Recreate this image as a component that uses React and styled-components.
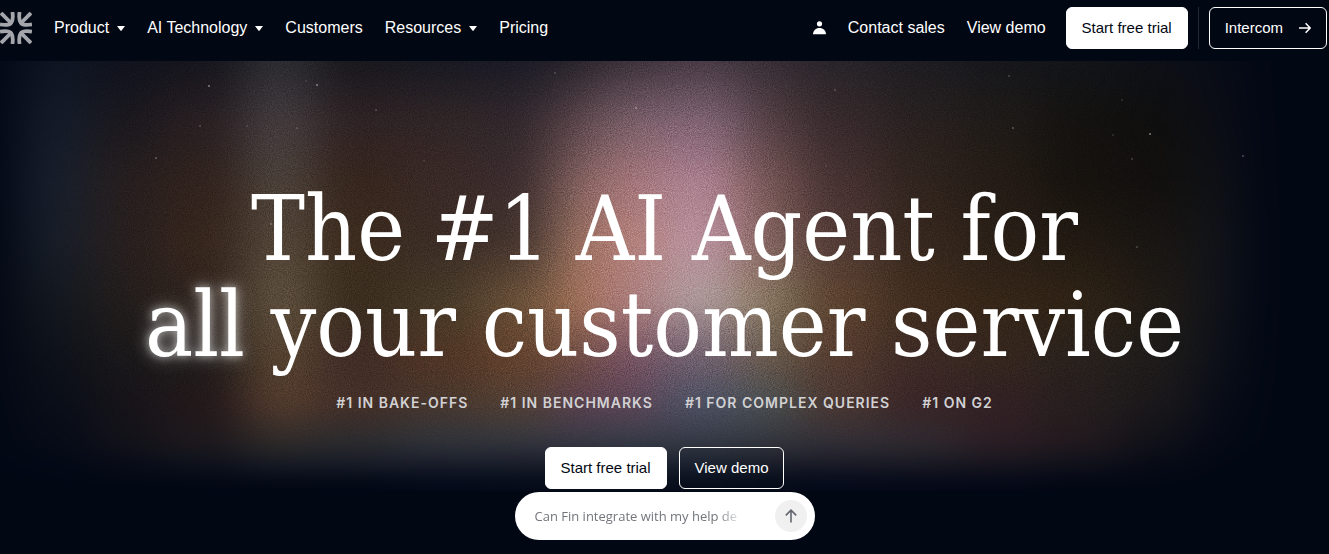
import React from "react";
import styled, { createGlobalStyle } from "styled-components";

const GlobalStyle = createGlobalStyle`
  *, *::before, *::after { box-sizing: border-box; }
  body {
    margin: 0;
    background: #020714;
    color: #fff;
    font-family: "Liberation Sans", Arial, sans-serif;
    font-size: 16px;
    line-height: 20px;
  }
  a { color: inherit; text-decoration: none; }
`;

const Header = styled.header`
  display: flex;
  align-items: flex-start;
  justify-content: space-between;
  height: 61px;
  padding: 7px 2px 0 0;
  background: #020714;
`;

const HeaderGroup = styled.div`
  display: flex;
  align-items: center;
  height: 42px;
`;

const LogoLink = styled.a`
  display: flex;
  margin-right: 22px;
`;

const Nav = styled.nav`
  display: flex;
  gap: ${(p) => p.$gap}px;
  margin-right: ${(p) => p.$end || 0}px;
`;

const MenuButton = styled.button`
  display: flex;
  align-items: center;
  gap: 8px;
  padding: 0;
  border: 0;
  background: none;
  color: inherit;
  font: inherit;
  cursor: pointer;
`;

const NavLink = styled.a`
  display: flex;
  align-items: center;
`;

const Divider = styled.span`
  width: 1px;
  height: 42px;
  margin: 0 10px;
  background: #242936;
`;

const Button = styled.button`
  display: flex;
  align-items: center;
  justify-content: center;
  gap: 16px;
  height: 42px;
  padding: 0 15px;
  border: 1px solid #fff;
  border-radius: 6px;
  background: ${(p) => (p.$solid ? "#fff" : "transparent")};
  color: ${(p) => (p.$solid ? "#020714" : "#fff")};
  font: inherit;
  font-size: 15px;
  white-space: nowrap;
  cursor: pointer;
`;

const Hero = styled.main`
  position: relative;
  display: flex;
  flex-direction: column;
  align-items: center;
  padding: 120px 0 14px;
`;

const Artwork = styled.svg`
  position: absolute;
  inset: 0 0 auto;
  width: 100%;
  height: 430px;
  z-index: -1;
`;

const Headline = styled.h1`
  margin: 0;
  font-family: "DejaVu Serif Condensed", "DejaVu Serif", serif;
  font-size: 90px;
  font-weight: 400;
  line-height: 96px;
  text-align: center;
`;

const Glow = styled.span`
  text-shadow: 0 0 8px rgba(255, 255, 255, 0.6), 0 0 18px rgba(255, 255, 255, 0.5);
`;

const Claims = styled.ul`
  display: flex;
  flex-wrap: wrap;
  justify-content: center;
  gap: 32px;
  margin: 20px 0 34px;
  padding: 0;
  list-style: none;
  color: #d2d1d3;
  font-family: Inter, sans-serif;
  font-size: 14px;
  font-weight: 600;
  letter-spacing: 1px;
`;

const Actions = styled.div`
  display: flex;
  gap: 12px;
`;

const AskForm = styled.form`
  display: flex;
  align-items: center;
  width: 300px;
  height: 48px;
  margin-top: 3px;
  padding: 0 8px 0 20px;
  border-radius: 24px;
  background: #fff;
`;

const AskInput = styled.input`
  width: 208px;
  padding: 0;
  border: 0;
  outline: 0;
  background: none;
  color: #202124;
  font-family: "Open Sans", "Noto Sans", sans-serif;
  font-size: 13px;
  line-height: 20px;
  mask-image: linear-gradient(90deg, #000 88%, transparent);
  &::placeholder { color: #73767c; opacity: 1; }
`;

const SendButton = styled.button`
  display: flex;
  align-items: center;
  justify-content: center;
  width: 32px;
  height: 32px;
  margin-left: auto;
  padding: 0;
  border: 0;
  border-radius: 50%;
  background: #f0f0f1;
  color: #62666d;
  cursor: pointer;
`;

const Caret = () => (
  <svg width="8" height="5" viewBox="0 0 8 5" aria-hidden="true">
    <path d="M0 0h8L4.6 4.6q-.6.7-1.2 0z" fill="currentColor" />
  </svg>
);

const Logo = () => (
  <svg width="32" height="32" viewBox="0 0 32 32" fill="none" stroke="#a4a6ac" strokeWidth="3.8" aria-hidden="true">
    {[[1, 1], [-1, 1], [1, -1], [-1, -1]].map(([sx, sy]) => (
      <g key={`${sx}${sy}`} transform={`translate(16 16) scale(${sx} ${sy}) translate(-16 -16)`}>
        <path d="M1 1l11 11" />
        <path d="M12.4 0C13.6 7 12.6 9 11 11S7 13.6 0 12.4" />
      </g>
    ))}
  </svg>
);

const PersonIcon = () => (
  <svg width="13" height="14" viewBox="0 0 13 14" fill="#fff" aria-hidden="true">
    <circle cx="6.5" cy="2.8" r="2.6" />
    <path d="M0 13.2C0 9.6 2.9 7 6.5 7s6.5 2.6 6.5 6.2z" />
  </svg>
);

const ArrowRight = () => (
  <svg width="12" height="12" viewBox="0 0 12 12" fill="none" stroke="currentColor" strokeWidth="1.5" aria-hidden="true">
    <path d="M0 6h11M6.6 1.2L11.2 6l-4.6 4.8" />
  </svg>
);

const ArrowUp = () => (
  <svg width="12" height="14" viewBox="0 0 12 14" fill="none" stroke="currentColor" strokeWidth="1.6" aria-hidden="true">
    <path d="M6 13.4V1.4M.8 6.4L6 1.2l5.2 5.2" />
  </svg>
);

const BASE = "#020714";
const STOPS = [0, 60, 120, 180, 240, 300, 340, 380, 405, 422];

/* Vertical light bands: left edge, then a colour for each height in STOPS. */
const BANDS = [
  [-80, [BASE, BASE, BASE, BASE, BASE, BASE, BASE, BASE, BASE, BASE]],
  [22, ["#0e1522", "#141c2a", "#181f2c", "#181e29", "#13181f", "#0d1119", "#090e18", "#060b17", "#030816", BASE]],
  [92, ["#10131f", "#1c191f", "#292020", "#2a2120", "#251f1d", "#1b191b", "#17141a", "#121219", "#070b17", BASE]],
  [160, ["#17161f", "#2b2124", "#34251f", "#3a281f", "#33261f", "#231e1d", "#24191b", "#1e191d", "#0c111c", BASE]],
  [244, ["#303036", "#4a4144", "#52473f", "#5a4b3d", "#665643", "#5d4833", "#593f30", "#302b29", "#141923", BASE]],
  [314, ["#19191f", "#322527", "#3a281f", "#402e20", "#3e3020", "#452f29", "#49322a", "#2c2c2f", "#151a26", BASE]],
  [400, ["#1a1a24", "#342829", "#3e2c29", "#3f2f28", "#4b3d2a", "#563928", "#4c3a30", "#31343b", "#171b28", "#04091a"]],
  [480, ["#1c1c28", "#342a2f", "#3f2f31", "#483730", "#70553c", "#6a4630", "#584437", "#34363e", "#171b28", "#050a18"]],
  [550, ["#2a252d", "#60494f", "#8a6763", "#a07866", "#a97a5d", "#765146", "#5f4453", "#383945", "#181c29", "#060b18"]],
  [600, ["#40343e", "#836670", "#aa7f83", "#b98983", "#b18586", "#7e5768", "#644a5c", "#383b48", "#181f2c", "#060c1a"]],
  [660, ["#4c3e4a", "#8a6c7e", "#b18a98", "#be99a5", "#b3a1a2", "#766676", "#52566a", "#363a46", "#181f2c", "#060c1a"]],
  [740, ["#3a3038", "#5a4449", "#7e5b5a", "#8c6b66", "#908067", "#6e5f50", "#4f5556", "#33363d", "#181c28", "#050a18"]],
  [800, ["#2a262b", "#3b2c2f", "#4b3535", "#573e39", "#624732", "#5a3f33", "#4f3a34", "#332f37", "#171924", "#04091a"]],
  [880, ["#1f1e23", "#2b2322", "#33261f", "#3a2a20", "#442f1f", "#412d28", "#3d2729", "#302a30", "#171822", "#040817"]],
  [960, ["#17181d", "#211c19", "#261d16", "#2c2118", "#392819", "#392920", "#352226", "#2c1e24", "#15141e", "#040816"]],
  [1040, ["#13151a", "#151310", "#18130f", "#231b13", "#322516", "#2b231f", "#28201f", "#22191e", "#0e101a", BASE]],
  [1120, ["#0d1017", "#100f0f", "#12100e", "#1a1613", "#221c16", "#201d1b", "#1c191c", "#101118", "#060a15", BASE]],
  [1190, ["#080c17", "#0c0e16", "#0f1116", "#111419", "#10131a", "#0c1018", "#080c17", "#050916", BASE, BASE]],
  [1240, [BASE, BASE, BASE, BASE, BASE, BASE, BASE, BASE, BASE, BASE]],
];

const STARS = [
  [209, 25], [247, 65], [297, 67], [156, 97], [376, 49], [424, 100], [317, 24], [306, 20],
  [200, 65], [271, 163], [555, 12], [552, 117], [636, 47], [572, 135], [835, 29], [1013, 67],
  [1132, 98], [1113, 74], [1150, 73], [1122, 39], [1137, 186], [1243, 95], [1009, 15], [826, 105],
];

const Nebula = () => (
  <Artwork viewBox="0 0 1329 430" preserveAspectRatio="none" aria-hidden="true">
    <defs>
      {BANDS.map(([x, colors], i) => (
        <linearGradient key={x} id={`band${i}`} gradientUnits="userSpaceOnUse" x1="0" y1="0" x2="0" y2="430">
          {colors.map((c, j) => (
            <stop key={j} offset={STOPS[j] / 430} stopColor={c} />
          ))}
        </linearGradient>
      ))}
      <filter id="soften" filterUnits="userSpaceOnUse" x="-100" y="-60" width="1530" height="500" colorInterpolationFilters="sRGB">
        <feGaussianBlur stdDeviation="24 8" />
      </filter>
      <filter id="grain" x="0" y="0" width="100%" height="100%" colorInterpolationFilters="sRGB">
        <feTurbulence type="fractalNoise" baseFrequency="0.95" numOctaves="2" seed="4" />
        <feColorMatrix values="1 0 0 0 -.12  1 0 0 0 -.12  1 0 0 0 -.12  0 0 0 0 1" />
      </filter>
      <linearGradient id="sideFade">
        <stop offset="0" stopColor="#000" />
        <stop offset=".1" stopColor="#fff" />
        <stop offset=".86" stopColor="#fff" />
        <stop offset=".95" stopColor="#000" />
      </linearGradient>
      <linearGradient id="baseFade" x2="0" y2="1">
        <stop offset=".75" stopColor="#000" stopOpacity="0" />
        <stop offset=".94" stopColor="#000" />
      </linearGradient>
      <mask id="grainMask">
        <rect width="1329" height="430" fill="url(#sideFade)" />
        <rect width="1329" height="430" fill="url(#baseFade)" />
      </mask>
    </defs>
    <g filter="url(#soften)">
      {BANDS.map(([x], i) => {
        const next = i + 1 < BANDS.length ? BANDS[i + 1][0] : 1430;
        return <rect key={x} x={x} y="-60" width={next - x + 1} height="500" fill={`url(#band${i})`} />;
      })}
    </g>
    <g mask="url(#grainMask)" style={{ mixBlendMode: "overlay" }} opacity=".32">
      <rect width="1329" height="430" filter="url(#grain)" />
    </g>
    {STARS.map(([x, y], i) => (
      <circle key={i} cx={x} cy={y} r={i % 3 ? 0.7 : 1} fill="#d8cfcb" opacity={i % 2 ? 0.35 : 0.55} />
    ))}
  </Artwork>
);

const CLAIMS = ["#1 IN BAKE-OFFS", "#1 IN BENCHMARKS", "#1 FOR COMPLEX QUERIES", "#1 ON G2"];

export default function App() {
  return (
    <>
      <GlobalStyle />
      <Header>
        <HeaderGroup>
          <LogoLink href="#" aria-label="Home">
            <Logo />
          </LogoLink>
          <Nav $gap={22} aria-label="Main">
            <MenuButton type="button">Product <Caret /></MenuButton>
            <MenuButton type="button">AI Technology <Caret /></MenuButton>
            <NavLink href="#">Customers</NavLink>
            <MenuButton type="button">Resources <Caret /></MenuButton>
            <NavLink href="#">Pricing</NavLink>
          </Nav>
        </HeaderGroup>
        <HeaderGroup>
          <Nav $gap={22} $end={20} aria-label="Account">
            <NavLink href="#" aria-label="Sign in"><PersonIcon /></NavLink>
            <NavLink href="#">Contact sales</NavLink>
            <NavLink href="#">View demo</NavLink>
          </Nav>
          <Button type="button" $solid>Start free trial</Button>
          <Divider />
          <Button type="button">Intercom <ArrowRight /></Button>
        </HeaderGroup>
      </Header>
      <Hero>
        <Nebula />
        <Headline>
          The #1 AI Agent for
          <br />
          <Glow>all</Glow> your customer service
        </Headline>
        <Claims>
          {CLAIMS.map((claim) => (
            <li key={claim}>{claim}</li>
          ))}
        </Claims>
        <Actions>
          <Button type="button" $solid>Start free trial</Button>
          <Button type="button">View demo</Button>
        </Actions>
        <AskForm onSubmit={(e) => e.preventDefault()}>
          <AskInput aria-label="Ask Fin a question" placeholder="Can Fin integrate with my help de" />
          <SendButton type="submit" aria-label="Send">
            <ArrowUp />
          </SendButton>
        </AskForm>
      </Hero>
    </>
  );
}
